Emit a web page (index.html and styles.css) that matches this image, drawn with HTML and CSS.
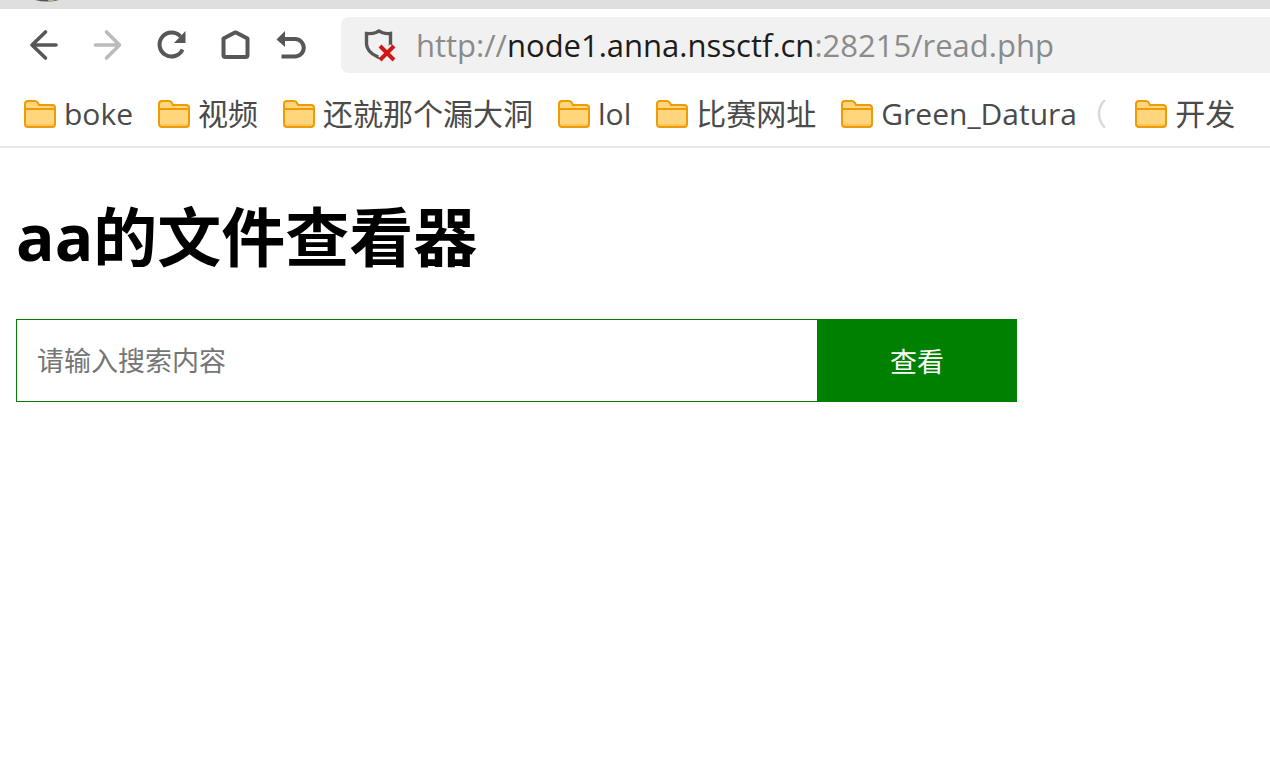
FILE: index.html
```html
<!DOCTYPE html>
<html lang="zh-CN">
<head>
<meta charset="utf-8">
<title>aa的文件查看器</title>
<link rel="stylesheet" href="styles.css">
</head>
<body>
<svg class="defs" aria-hidden="true">
  <symbol id="folder" viewBox="0 0 32 28">
    <path d="M1 4Q1 1 4 1H11Q13 1 14 3L15 5H28Q31 5 31 8V24Q31 27 28 27H4Q1 27 1 24Z" fill="#ffd67b"/>
    <path d="M2 24H30V26H2Z" fill="#fcc45c"/>
    <path d="M1 4Q1 1 4 1H11Q13 1 14 3L15 5H28Q31 5 31 8V24Q31 27 28 27H4Q1 27 1 24ZM1 9H31" fill="none" stroke="#ee9b07" stroke-width="2"/>
  </symbol>
</svg>
<header class="browser">
  <div class="tabs">
    <svg class="favicon" viewBox="0 0 24 2" aria-hidden="true"><path d="M0 0H24Q12 3 0 0Z" fill="#555"/><path d="M13 0H19V1H13Z" fill="#b8ad83"/></svg>
  </div>
  <div class="toolbar">
    <nav class="controls">
      <button class="tool" aria-label="后退"><svg viewBox="0 0 32 32"><path d="M28 16H4M17.500 3L4 16L17.500 29" stroke-width="3.600" stroke-linecap="round" stroke-linejoin="round"/></svg></button>
      <button class="tool tool-off" aria-label="前进" disabled><svg viewBox="0 0 32 32"><path d="M3.500 16H27.500M14.500 3L27.500 16L14.500 29" stroke-width="3.600" stroke-linecap="round" stroke-linejoin="round"/></svg></button>
      <button class="tool" aria-label="刷新"><svg viewBox="0 0 32 32"><path d="M24.500 7.500A12 12 0 1 0 26.500 20.500" stroke-width="4"/><path class="solid" d="M29.500 2V14H18Z"/></svg></button>
      <button class="tool" aria-label="主页"><svg viewBox="0 0 32 32"><path d="M3.500 9.500L14 4Q15.500 3 17 4L27.500 9.500V26Q27.500 28 25.500 28H5.500Q3.500 28 3.500 26Z" stroke-width="4" stroke-linejoin="round"/></svg></button>
      <button class="tool tool-undo" aria-label="恢复"><svg viewBox="0 0 32 32"><path d="M9 10H19A8.750 8.750 0 0 1 19 27.500H5.500" stroke-width="4"/><path class="solid" d="M0.500 10.500L9 2V18Z"/></svg></button>
    </nav>
    <div class="address">
      <svg class="shield" viewBox="0 0 32 34" aria-hidden="true">
        <path d="M15 3L18 4.500Q22 6 26.500 5.500V16Q26.500 23 20 28Q17 31 13 28.500Q3 24 2.500 16V5.500Q8 6 12 4.500Z" fill="none" stroke="#575757" stroke-width="3.400"/>
        <path d="M17 19L29 31M29 19L17 31" stroke="#f1f1f1" stroke-width="8"/>
        <path d="M16 18L30 32M30 18L16 32" stroke="#d01818" stroke-width="4"/>
      </svg>
      <span class="url">http://<b class="host">node1.anna.nssctf.cn</b>:28215/read.php</span>
    </div>
  </div>
  <nav class="bookmarks">
    <a class="bookmark" href="#"><svg class="folder"><use href="#folder"/></svg><span>boke</span></a>
    <a class="bookmark" href="#"><svg class="folder"><use href="#folder"/></svg><span>视频</span></a>
    <a class="bookmark" href="#"><svg class="folder"><use href="#folder"/></svg><span>还就那个漏大洞</span></a>
    <a class="bookmark" href="#"><svg class="folder"><use href="#folder"/></svg><span>lol</span></a>
    <a class="bookmark" href="#"><svg class="folder"><use href="#folder"/></svg><span>比赛网址</span></a>
    <a class="bookmark" href="#"><svg class="folder"><use href="#folder"/></svg><span class="clipped">Green_Datura<span class="fade">（</span></span></a>
    <a class="bookmark" href="#"><svg class="folder"><use href="#folder"/></svg><span>开发</span></a>
  </nav>
</header>
<main class="page">
  <h1 class="title">aa的文件查看器</h1>
  <form class="search">
    <input class="query" type="text" aria-label="搜索内容" placeholder="请输入搜索内容">
    <button class="submit" type="button">查看</button>
  </form>
</main>
</body>
</html>
```
FILE: styles.css
```css
* { box-sizing: border-box; }
body {
  margin: 0;
  background: #fff;
  color: #000;
  font-family: "Open Sans", "Noto Sans CJK SC", sans-serif;
  overflow-x: hidden;
}
.defs { position: absolute; width: 0; height: 0; }
.browser { border-bottom: 2px solid #e4e8ec; }
.tabs { height: 9px; padding-left: 35px; background: #dfdfdf; }
.favicon { display: block; width: 24px; height: 2px; }
.toolbar { display: flex; align-items: center; padding: 8px 0 8px 28px; }
.controls { display: flex; gap: 32px; width: 313px; flex: none; }
.tool {
  width: 32px;
  height: 32px;
  padding: 0;
  border: 0;
  background: none;
  color: #575757;
}
.tool svg { display: block; width: 32px; height: 32px; fill: none; stroke: currentColor; }
.tool .solid { fill: currentColor; stroke: none; }
.tool-off { color: #bbb; }
.tool-undo { margin-left: -8px; }
.address {
  display: flex;
  flex: 1;
  align-items: center;
  gap: 20px;
  height: 56px;
  padding-left: 23px;
  border-radius: 8px 0 0 8px;
  background: #f1f1f1;
}
.shield { flex: none; width: 32px; height: 34px; }
.url { color: #8b8b8b; font-size: 31px; line-height: 40px; white-space: nowrap; }
.host { color: #1c1c1c; font-weight: 400; }
.bookmarks {
  display: flex;
  gap: 25px;
  padding: 11px 0 10px 24px;
}
.bookmark {
  display: flex;
  align-items: center;
  gap: 8px;
  height: 44px;
  flex: none;
  color: #4a4a4a;
  font-size: 30px;
  line-height: 44px;
  text-decoration: none;
  white-space: nowrap;
}
.folder { flex: none; width: 32px; height: 28px; }
.clipped { width: 229px; overflow: hidden; }
.fade { color: #d4d6da; }
.page { padding: 47px 16px; }
.title { margin: 0; font-size: 64px; font-weight: 700; line-height: 84px; }
.search { display: flex; width: 100%; max-width: 1001px; margin-top: 40px; }
.query {
  flex: 1;
  min-width: 0;
  height: 83px;
  padding: 0 20px;
  border: 1px solid green;
  border-right: 0;
  border-radius: 0;
  outline: 0;
  background: #fff;
  font-family: inherit;
  font-size: 27px;
}
.query::placeholder { color: #757575; }
.submit {
  flex: none;
  width: 200px;
  border: 0;
  background: green;
  color: #fff;
  font-family: inherit;
  font-size: 27px;
}
```
